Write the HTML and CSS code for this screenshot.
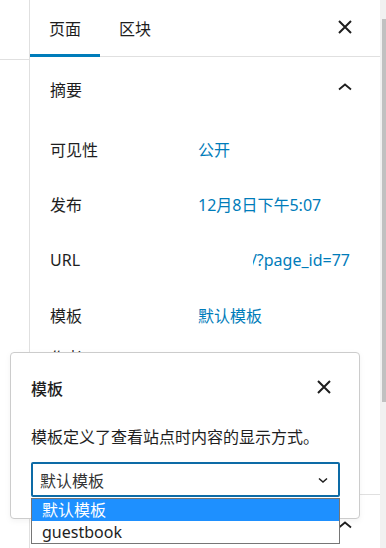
FILE: index.html
```html
<!DOCTYPE html>
<html lang="zh-CN">
<head>
    <meta charset="UTF-8">
    <meta name="viewport" content="width=device-width, initial-scale=1.0">
    <title>页面设置</title>
    <link rel="stylesheet" href="styles.css">
</head>
<body>
    <div class="editor">
        <div class="canvas">
            <div class="canvas-bar"></div>
        </div>

        <aside class="sidebar">
            <div class="tabs">
                <button class="tab is-active">页面</button>
                <button class="tab">区块</button>
                <button class="icon-btn tabs-close" aria-label="关闭">
                    <svg viewBox="0 0 24 24" width="24" height="24"><path d="M6 6l12 12M18 6L6 18"/></svg>
                </button>
            </div>

            <section class="panel panel-summary">
                <div class="panel-title">
                    <span>摘要</span>
                    <svg class="chevron" viewBox="0 0 24 24" width="24" height="24"><path d="M6 14.5l6-5 6 5"/></svg>
                </div>
                <div class="row">
                    <span class="label">可见性</span>
                    <span class="value">公开</span>
                </div>
                <div class="row">
                    <span class="label">发布</span>
                    <span class="value">12月8日下午5:07</span>
                </div>
                <div class="row">
                    <span class="label">URL</span>
                    <span class="value value-url"><span>http://localhost/?page_id=77</span></span>
                </div>
                <div class="row">
                    <span class="label">模板</span>
                    <span class="value">默认模板</span>
                </div>
                <div class="row row-short">
                    <span class="label">作者</span>
                </div>
            </section>

            <!-- 下一个面板，标题被下拉列表遮住 -->
            <section class="panel">
                <div class="panel-title panel-title-end">
                    <svg class="chevron" viewBox="0 0 24 24" width="24" height="24"><path d="M6 14.5l6-5 6 5"/></svg>
                </div>
            </section>
        </aside>

        <div class="scrollbar">
            <div class="scrollbar-thumb"></div>
        </div>
    </div>

    <!-- 模板弹出框 -->
    <div class="popover">
        <div class="popover-header">
            <h2>模板</h2>
            <button class="icon-btn popover-close" aria-label="关闭">
                <svg viewBox="0 0 24 24" width="24" height="24"><path d="M6 6l12 12M18 6L6 18"/></svg>
            </button>
        </div>
        <p class="popover-text">模板定义了查看站点时内容的显示方式。</p>
        <div class="select">
            <span>默认模板</span>
            <svg viewBox="0 0 16 16" width="16" height="16"><path d="M4 6.5l4 3.5 4-3.5"/></svg>
            <ul class="select-list">
                <li class="is-selected">默认模板</li>
                <li>guestbook</li>
            </ul>
        </div>
    </div>
</body>
</html>
```

FILE: styles.css
```css
* {
    box-sizing: border-box;
}
body {
    margin: 0;
    width: 386px;
    height: 548px;
    overflow: hidden;
    position: relative;
    font-family: "Noto Sans", "Noto Sans CJK SC", sans-serif;
    font-size: 16px;
    color: #1e1e1e;
    background-color: white;
}
button {
    font: inherit;
    color: inherit;
    background: none;
    border: none;
    padding: 0;
    cursor: pointer;
}
.editor {
    display: flex;
    height: 548px;
}
.canvas {
    width: 29px;
}
.canvas-bar {
    height: 60px;
    border-bottom: 1px solid #e0e0e0;
}
.sidebar {
    width: 351px;
    border-left: 1px solid #e0e0e0;
    overflow: hidden;
}
.tabs {
    display: flex;
    align-items: flex-start;
    height: 57px;
    border-bottom: 1px solid #e0e0e0;
}
.tab {
    height: 57px;
    margin-bottom: -1px;
    padding: 1px 19px 0;
    line-height: 57px;
}
.tab.is-active {
    box-shadow: inset 0 -3px 0 #007cba;
}
.icon-btn svg {
    display: block;
    fill: none;
    stroke: #1e1e1e;
    stroke-width: 2;
}
.tabs-close {
    margin: 15px 23px 0 auto;
}
.panel {
    border-bottom: 1px solid #e0e0e0;
}
.panel-summary {
    padding-bottom: 123px;
}
.panel-title {
    display: flex;
    align-items: center;
    justify-content: space-between;
    height: 64px;
    padding: 0 23px 0 20px;
}
.panel-title-end {
    justify-content: flex-end;
}
.chevron {
    display: block;
    margin-top: -5px;
    fill: none;
    stroke: #1e1e1e;
    stroke-width: 1.8;
}
.row {
    display: flex;
    align-items: center;
    height: 55.5px;
    padding: 0 30px 0 20px;
}
.row-short {
    height: 28px;
}
.label {
    width: 148px;
    flex-shrink: 0;
}
.value {
    color: #007cba;
}
.value-url {
    display: flex;
    justify-content: flex-end;
    width: 97px;
    margin-left: auto;
    overflow: hidden;
    white-space: nowrap;
}
.scrollbar {
    width: 6px;
    padding-left: 2px;
    background-color: #f1f1f1;
}
.scrollbar-thumb {
    margin-top: 19px;
    height: 383px;
    background-color: #c1c1c1;
}
.popover {
    position: absolute;
    left: 10px;
    top: 352px;
    width: 350px;
    height: 167px;
    padding: 11px 19px 0 20px;
    background-color: white;
    border: 1px solid #cccccc;
    border-radius: 4px;
    box-shadow: 0 2px 6px rgba(0, 0, 0, 0.05);
}
.popover-header {
    display: flex;
    align-items: center;
    justify-content: space-between;
    height: 48px;
}
.popover-header h2 {
    margin: 0;
    font-size: 16px;
    font-weight: 500;
}
.popover-close {
    margin-right: 4px;
    margin-top: -2px;
}
.popover-text {
    margin: 13px 0 0;
    line-height: 24px;
}
.select {
    position: relative;
    display: flex;
    align-items: center;
    justify-content: space-between;
    height: 35px;
    margin-top: 13px;
    padding: 0 7px 0 7px;
    border: 2px solid #0d6ba6;
    border-radius: 2px;
    color: #333;
}
.select svg {
    display: block;
    fill: none;
    stroke: #1e1e1e;
    stroke-width: 1.5;
}
.select-list {
    position: absolute;
    top: calc(100% + 3px);
    left: -2px;
    right: -2px;
    margin: 0;
    padding: 0;
    list-style: none;
    background-color: white;
    border: 1px solid #767676;
    color: #1e1e1e;
}
.select-list li {
    height: 22px;
    line-height: 22px;
    padding: 0 10px;
}
.select-list li.is-selected {
    background-color: #1e90ff;
    color: white;
}
```
